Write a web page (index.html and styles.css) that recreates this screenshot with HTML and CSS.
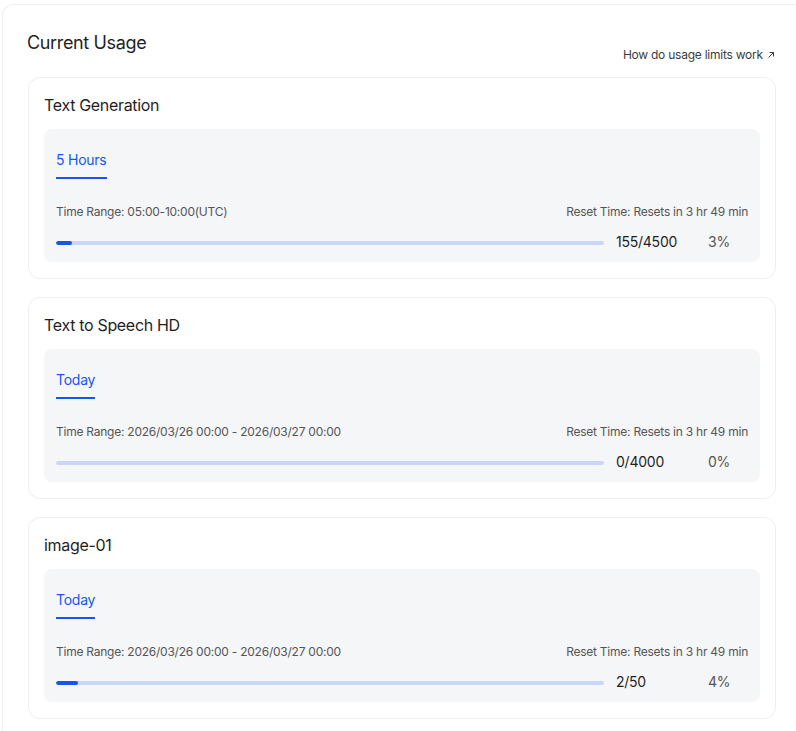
FILE: index.html
```html
<!DOCTYPE html>
<html lang="en">
<head>
    <meta charset="UTF-8">
    <meta name="viewport" content="width=device-width, initial-scale=1.0">
    <title>Current Usage</title>
    <link rel="stylesheet" href="styles.css">
</head>
<body>
    <div class="panel">
        <header class="panel-head">
            <h1>Current Usage</h1>
            <a class="help-link" href="#">How do usage limits work
                <svg width="8" height="8" viewBox="0 0 8 8"><path d="M1.5 6.5 L6.5 1.5 M2.5 1.5 H6.5 V5.5" fill="none" stroke="currentColor" stroke-width="1"/></svg>
            </a>
        </header>

        <section class="usage-card">
            <h2>Text Generation</h2>
            <div class="usage-box">
                <div class="tabs"><span class="tab active">5 Hours</span></div>
                <div class="meta">
                    <span>Time Range: 05:00-10:00(UTC)</span>
                    <span>Reset Time: Resets in 3 hr 49 min</span>
                </div>
                <div class="progress-row">
                    <div class="bar"><div class="fill" style="width: 3%"></div></div>
                    <span class="count">155/4500</span>
                    <span class="percent">3%</span>
                </div>
            </div>
        </section>

        <section class="usage-card">
            <h2>Text to Speech HD</h2>
            <div class="usage-box">
                <div class="tabs"><span class="tab active">Today</span></div>
                <div class="meta">
                    <span>Time Range: 2026/03/26 00:00 - 2026/03/27 00:00</span>
                    <span>Reset Time: Resets in 3 hr 49 min</span>
                </div>
                <div class="progress-row">
                    <div class="bar"><div class="fill" style="width: 0%"></div></div>
                    <span class="count">0/4000</span>
                    <span class="percent">0%</span>
                </div>
            </div>
        </section>

        <section class="usage-card">
            <h2>image-01</h2>
            <div class="usage-box">
                <div class="tabs"><span class="tab active">Today</span></div>
                <div class="meta">
                    <span>Time Range: 2026/03/26 00:00 - 2026/03/27 00:00</span>
                    <span>Reset Time: Resets in 3 hr 49 min</span>
                </div>
                <div class="progress-row">
                    <div class="bar"><div class="fill" style="width: 4%"></div></div>
                    <span class="count">2/50</span>
                    <span class="percent">4%</span>
                </div>
            </div>
        </section>
    </div>
</body>
</html>
```

FILE: styles.css
```css
body {
    margin: 0;
    font-family: Inter, "Noto Sans", sans-serif;
    letter-spacing: -0.015em;
    background-color: #fff;
    color: #1f1f1f;
    overflow: hidden;
}
/* the panel runs on past the right edge, so it has no right border */
.panel {
    margin: 4px 0 0 2px;
    padding: 24px 0 12px 25px;
    border: 1px solid #eeeff1;
    border-right: none;
    border-radius: 12px 0 0 12px;
}
.panel-head {
    display: flex;
    justify-content: space-between;
    align-items: flex-start;
    width: 747px;
    height: 33px;
    margin-bottom: 15px;
}
.panel-head h1 {
    margin: 0 0 0 -1px;
    font-size: 18px;
    line-height: 28px;
    font-weight: 400;
    letter-spacing: -0.02em;
}
.help-link {
    margin-top: 18px;
    font-size: 12px;
    line-height: 16px;
    color: #3c3c3c;
    text-decoration: none;
}
.help-link svg {
    margin-left: 1px;
}
.usage-card {
    width: 716px;
    padding: 15px 15px 16px;
    margin-bottom: 18px;
    border: 1px solid #edeef0;
    border-radius: 12px;
}
.usage-card h2 {
    margin: 0 0 12px;
    font-size: 16px;
    line-height: 24px;
    font-weight: 400;
    letter-spacing: -0.02em;
}
.usage-box {
    background-color: #f5f6f8;
    border-radius: 8px;
    padding: 21px 12px 11px;
}
.tabs {
    display: flex;
}
.tab {
    font-size: 14px;
    line-height: 20px;
    padding-bottom: 7px;
    border-bottom: 2px solid transparent;
}
.tab.active {
    color: #1456f0;
    border-bottom-color: #1456f0;
}
.meta {
    display: flex;
    justify-content: space-between;
    margin-top: 25px;
    font-size: 12px;
    line-height: 16px;
    color: #555;
}
.progress-row {
    display: flex;
    align-items: center;
    margin-top: 11px;
    height: 20px;
}
.bar {
    flex: 1;
    height: 4px;
    margin-top: 4px;
    border-radius: 2px;
    background-color: #cad6f7;
    overflow: hidden;
}
.fill {
    height: 100%;
    border-radius: 2px;
    background-color: #1456f0;
}
.count {
    width: 92px;
    margin-left: 12px;
    font-size: 14px;
    color: #1f1f1f;
}
.percent {
    width: 40px;
    font-size: 14px;
    color: #555;
}
```
